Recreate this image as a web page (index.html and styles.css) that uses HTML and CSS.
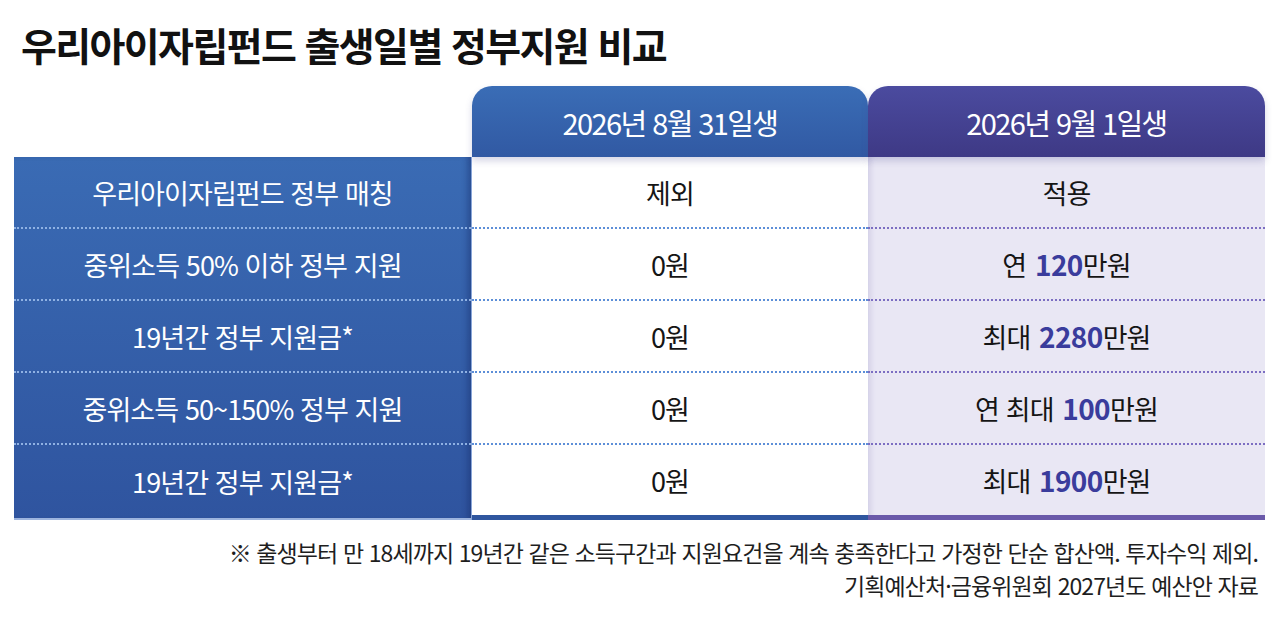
FILE: index.html
```html
<!DOCTYPE html>
<html lang="ko">
<head>
<meta charset="utf-8">
<link rel="stylesheet" href="styles.css">
</head>
<body>
<div class="page">
  <h1 class="title">우리아이자립펀드 출생일별 정부지원 비교</h1>
  <div class="table">
    <div class="col col-label">
      <div class="head head-empty"></div>
      <div class="body">
        <div class="cell">우리아이자립펀드 정부 매칭</div>
        <div class="cell">중위소득 50% 이하 정부 지원</div>
        <div class="cell">19년간 정부 지원금*</div>
        <div class="cell">중위소득 50~150% 정부 지원</div>
        <div class="cell last">19년간 정부 지원금*</div>
      </div>
    </div>
    <div class="col col-a">
      <div class="head">2026년 8월 31일생</div>
      <div class="body">
        <div class="cell">제외</div>
        <div class="cell">0원</div>
        <div class="cell">0원</div>
        <div class="cell">0원</div>
        <div class="cell last">0원</div>
      </div>
    </div>
    <div class="col col-b">
      <div class="head">2026년 9월 1일생</div>
      <div class="body">
        <div class="cell">적용</div>
        <div class="cell">연&nbsp;<b>120</b>만원</div>
        <div class="cell">최대&nbsp;<b>2280</b>만원</div>
        <div class="cell">연 최대&nbsp;<b>100</b>만원</div>
        <div class="cell last">최대&nbsp;<b>1900</b>만원</div>
      </div>
    </div>
  </div>
  <div class="notes">
    <p>※ 출생부터 만 18세까지 19년간 같은 소득구간과 지원요건을 계속 충족한다고 가정한 단순 합산액. 투자수익 제외.</p>
    <p>기획예산처·금융위원회 2027년도 예산안 자료</p>
  </div>
</div>
</body>
</html>
```

FILE: styles.css
```css
* { box-sizing: border-box; }
html, body { margin: 0; padding: 0; background: #ffffff; }
body {
  font-family: "Noto Sans CJK KR", "Noto Sans", sans-serif;
  color: #1a1a1a;
  width: 1280px;
  height: 618px;
  overflow: hidden;
}
.page { display: flex; flex-direction: column; }

.title {
  margin: 0;
  padding: 16px 0 0 21px;
  height: 86px;
  font-size: 39px;
  font-weight: 700;
  letter-spacing: -1.6px;
  line-height: 56px;
  color: #111;
}

.table {
  display: flex;
  padding-left: 14px;
}
.col { display: flex; flex-direction: column; }
.col-label { width: 458px; }
.col-a { width: 396px; }
.col-b { width: 397px; }

.head {
  height: 71px;
  display: flex;
  align-items: center;
  justify-content: center;
  color: #fff;
  font-size: 29px;
  letter-spacing: -1.6px;
  border-radius: 20px 20px 0 0;
  position: relative;
  z-index: 2;
  box-shadow: 0 4px 7px rgba(70, 70, 140, 0.22);
}
.head-empty { background: transparent; box-shadow: none; }
.col-a .head { background: linear-gradient(180deg, #3a6db6 0%, #3159a3 100%); }
.col-b .head { background: linear-gradient(180deg, #4b4b9f 0%, #3e3985 100%); }

.body { display: flex; flex-direction: column; }
.cell {
  height: 72px;
  display: flex;
  align-items: center;
  justify-content: center;
  font-size: 27px;
  letter-spacing: -0.9px;
  border-bottom: 2px dotted;
}
.cell.last { height: 75px; }

.col-label .body {
  background: linear-gradient(180deg, #3a6bb4 0%, #2f549f 100%);
  box-shadow: inset -6px 0 6px -3px rgba(20, 40, 100, 0.45);
  border-right: 1px solid #8aa6d8;
}
.col-label .cell { color: #fff; border-bottom-color: #8fb1e3; }
.col-label .cell.last { border-bottom: 2px solid #9db4de; }

.col-a .body { background: #ffffff; }
.col-a .cell { color: #151515; border-bottom-color: #5d8fd8; }
.col-a .cell.last { border-bottom: 5px solid #2f569f; }

.col-b .body {
  background: #e9e7f4;
  box-shadow: inset 6px 0 6px -4px rgba(90, 80, 160, 0.18);
}
.col-b .cell { color: #151515; border-bottom-color: #7c6ec2; }
.col-b .cell.last { border-bottom: 5px solid #6a59a9; }
.col-b b { color: #3a3c9c; font-weight: 700; font-size: 28px; letter-spacing: -0.6px; margin-left: 2px; }

.notes {
  padding: 16px 22px 0 0;
  text-align: right;
}
.notes p {
  margin: 0;
  font-size: 23px;
  line-height: 33px;
  letter-spacing: -0.9px;
  color: #1e1e1e;
}
```
